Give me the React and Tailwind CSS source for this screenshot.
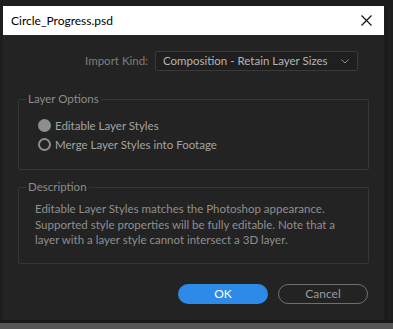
import React from 'react';

const font = { fontFamily: 'Lato, "Liberation Sans", sans-serif' };

const Radio = ({ checked, label }) => (
  <label className="flex items-center gap-[4px] h-[19px] text-[11.5px] text-[#a3a3a3]">
    {checked ? (
      <span className="w-[13px] h-[13px] rounded-full bg-[#8e8e8e]" />
    ) : (
      <span className="w-[13px] h-[13px] rounded-full border-2 border-[#8e8e8e]" />
    )}
    {label}
  </label>
);

const Group = ({ title, className, children }) => (
  <div className={`relative border border-[#363636] rounded-[2px] ${className}`}>
    <span className="absolute left-[7px] top-[-9px] px-[2px] bg-[#232323] text-[11.5px] leading-[16px] text-[#8c8c8c]">{title}</span>
    {children}
  </div>
);

export default function App() {
  return (
    <div className="w-[393px] h-[329px] bg-[#1d1d1d] flex flex-col overflow-hidden" style={font}>
      <div className="flex flex-1 pt-[6px] pl-[3px]">
        <div className="w-[381px] flex flex-col">
          <div className="h-[29px] bg-white flex items-center justify-between pl-[8px] pr-[12px]">
            <span className="text-[12px] text-black">Circle_Progress.psd</span>
            <svg width="11" height="11" viewBox="0 0 11 11">
              <path d="M0.5 0.5 L10.5 10.5 M10.5 0.5 L0.5 10.5" stroke="#111" strokeWidth="1.2" />
            </svg>
          </div>
          <div className="flex-1 bg-[#232323] flex flex-col px-[15px]">
            <div className="flex items-center justify-end mt-[16px] pr-[11px] gap-[7px]">
              <span className="text-[11.5px] text-[#7f7f7f]">Import Kind:</span>
              <div className="w-[203px] h-[20px] border border-[#3a3a3a] bg-[#1f1f1f] rounded-[2px] flex items-center justify-between pl-[7px] pr-[8px]">
                <span className="text-[11.5px] text-[#b5b5b5] whitespace-nowrap">Composition - Retain Layer Sizes</span>
                <svg width="8" height="5" viewBox="0 0 8 5">
                  <path d="M0.5 0.5 L4 4 L7.5 0.5" stroke="#8a8a8a" fill="none" strokeWidth="1" />
                </svg>
              </div>
            </div>
            <Group title="Layer Options" className="mt-[28px] h-[71px]">
              <div className="flex flex-col pt-[16px] pl-[19px]">
                <Radio checked label="Editable Layer Styles" />
                <Radio label="Merge Layer Styles into Footage" />
              </div>
            </Group>
            <Group title="Description" className="mt-[17px] h-[77px]">
              <p className="text-[11.5px] leading-[15.5px] text-[#8f8f8f] pt-[13px] pl-[16px] pr-[10px]">
                Editable Layer Styles matches the Photoshop appearance. Supported style properties will be fully editable. Note that a layer with a layer style cannot intersect a 3D layer.
              </p>
            </Group>
            <div className="flex justify-end gap-[10px] mt-[20px] pr-[1px]">
              <button className="w-[90px] h-[20px] rounded-full bg-[#2d8ae8] text-white text-[12px] flex items-center justify-center">OK</button>
              <button className="w-[90px] h-[20px] rounded-full border border-[#707070] text-[#9a9a9a] text-[12px] flex items-center justify-center">Cancel</button>
            </div>
          </div>
        </div>
        <div className="flex-1 flex">
          <div className="w-[2px]" />
          <div className="w-[1px] bg-[#181818]" />
        </div>
      </div>
      <div className="h-[3px] bg-[#161616]" />
      <div className="h-[6px] bg-[#555555]" />
    </div>
  );
}
